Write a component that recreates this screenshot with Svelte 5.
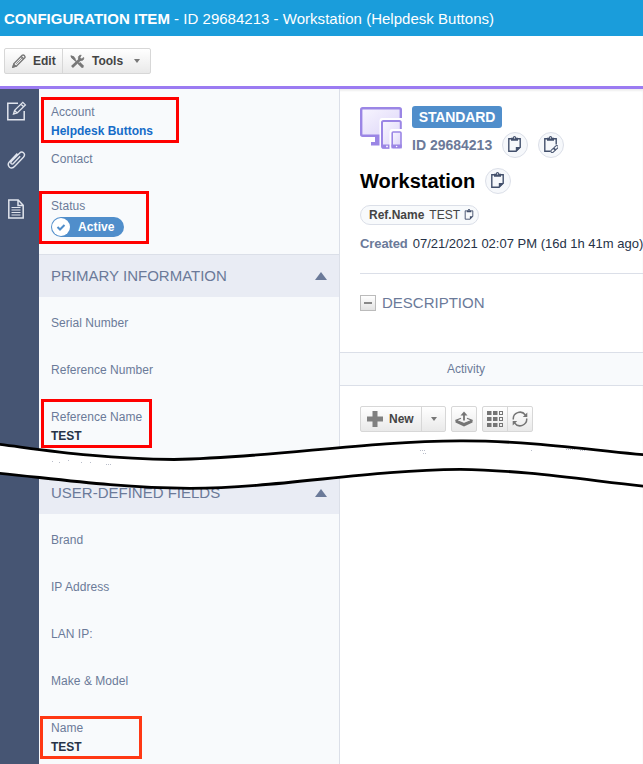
<script>
  const summary = [
    { label: 'Account', value: 'Helpdesk Buttons' },
    { label: 'Contact' },
    { label: 'Status', status: 'Active' }
  ];
  const primary = ['Serial Number', 'Reference Number', 'Reference Name'];
  const custom = ['Brand', 'IP Address', 'LAN IP:', 'Make & Model', 'Name'];
  const tested = ['Reference Name', 'Name'];
</script>

{#snippet clipboard(size, link)}
  <svg width={size} height={size * 17 / 15} viewBox="0 0 15 17" fill="none">
    <path d="M4 2.7H1.8V15.3H9L13.2 11.2V2.7H11" stroke="#43506c" stroke-width="1.4" />
    <path d="M4 1.8H5.7Q6 0 7.5 0Q9 0 9.3 1.8H11V4.8H4Z" fill="#43506c" />
    <circle cx="7.5" cy="1.9" r=".7" fill="#fff" />
    {#if link}
      <path d="M7.5 17V12.5L11 8.5H15V17Z" fill="#f6f8fb" />
      <g stroke="#43506c" stroke-width="1" transform="rotate(-43 11.5 13)">
        <rect x="7" y="11.7" width="5" height="2.8" rx="1.4" /><rect x="11" y="11.7" width="5" height="2.8" rx="1.4" />
      </g>
    {:else}
      <path d="M8.8 15.9V11H13.8Z" fill="#43506c" />
    {/if}
  </svg>
{/snippet}

{#snippet section(title)}
  <div class="section"><span>{title}</span><i class="up"></i></div>
{/snippet}

{#snippet field(label)}
  <div class="field">
    <div class="label">{label}</div>
    {#if tested.includes(label)}<div class="value">TEST</div>{/if}
  </div>
{/snippet}

<div class="page">
  <header><b>CONFIGURATION ITEM</b><span>&nbsp;- ID 29684213 - Workstation (Helpdesk Buttons)</span></header>
  <div class="toolbar">
    <div class="group">
      <button class="edit">
        <svg width="14" height="14" viewBox="0 0 14 14" fill="none" stroke="#777" stroke-width="1.4"><path d="M1 13L2 9.5L10.2 1.3Q11.2.5 12.4 1.6Q13.5 2.8 12.7 3.8L4.6 12Z M9.2 2.5L11.5 4.8" /><path d="M4.2 9.8L10 4" stroke-width=".8" /><path d="M1 13L1.8 10.5L3.8 12.2Z" fill="#777" /></svg>
        <span>Edit</span>
      </button>
      <button class="tools">
        <svg width="15" height="15" viewBox="0 0 15 15" fill="none" stroke="#777"><path d="M2 13L10.5 5" stroke-width="2.8" /><path d="M13.7 3.5L11.5 5L10 3.5L11.2 1.2C8.8.9 8 3 8.5 5L10 6.5C12 7 14.4 5.8 13.7 3.5Z" fill="#777" stroke-width=".8" /><path d="M1 2L5 6.3L13.3 13.5" stroke-width="1.3" /><path d="M9 9L13 13" stroke-width="3.1" /><path d="M.5 1.2L3.8 2.2L6 5.2L4.5 6.5L1.4 4Z" fill="#777" stroke="none" /></svg>
        <span>Tools</span><i class="down"></i>
      </button>
    </div>
  </div>
  <div class="body">
    <nav>
      <svg width="20" height="20" viewBox="0 0 20 20" fill="none" stroke="#e0e4ed" stroke-width="1.5"><path d="M11 2.2H.8V18.7H17.2V10" /><path d="M6.5 13L7.6 9.4L15.8 1.3L18.4 3.9L10.2 12Z M7.8 9.6L10 11.8 M14 3.2L16.6 5.8" stroke-width="1.3" /></svg>
      <svg width="20" height="20" viewBox="0 0 20 20" fill="none" stroke="#e0e4ed" stroke-width="1.4"><path d="M13.2 6.3L6.6 13.2Q5.2 14.8 4.2 13.6Q3.2 12.5 4.8 11L12.5 3.2Q14.6 1 16.5 2.7Q18.6 4.7 16.4 7.2L8 16Q5.1 19.4 2.5 17.2Q0 14.8 2.3 12L10.3 3.6" /></svg>
      <svg width="18" height="20" viewBox="0 0 18 20" fill="none" stroke="#e0e4ed" stroke-width="1.5"><path d="M1.8 1H11.2L16.2 6.2V19H1.8Z M11 1V6.5H16.2" /><path d="M4.5 8.5H13.5 M4.5 11H13.5 M4.5 13.5H13.5 M4.5 16H13.5" stroke-width="1" /></svg>
    </nav>
    <aside>
      {#each summary as f}
        <div class="field">
          <div class="label">{f.label}</div>
          {#if f.value}<div class="value link">{f.value}</div>{/if}
          {#if f.status}
            <div class="status"><svg width="18" height="18" viewBox="0 0 18 18"><circle cx="9" cy="9" r="9" fill="#fff" /><path d="M5.5 9L8 11.5L12.5 7" fill="none" stroke="#508ecb" stroke-width="2" /></svg>{f.status}</div>
          {/if}
        </div>
      {/each}
      <div class="gap"></div>
      {@render section('PRIMARY INFORMATION')}
      <div class="fields first">{#each primary as p}{@render field(p)}{/each}</div>
      {@render section('USER-DEFINED FIELDS')}
      <div class="fields">{#each custom as c}{@render field(c)}{/each}</div>
    </aside>
    <main>
      <div class="top">
        <div class="ident">
          <svg class="device" width="42" height="43" viewBox="0 0 42 43">
            <defs><linearGradient id="lilac" x2="1" y2="1"><stop stop-color="#f8f6ff" /><stop offset="1" stop-color="#dcd4f8" /></linearGradient></defs>
            <rect x="1.2" y="2.2" width="39.6" height="27.6" rx="1.5" fill="url(#lilac)" stroke="#9b86e5" stroke-width="2.4" />
            <path d="M15 31V36H11V39.5H21V31Z" fill="#9b86e5" />
            <path d="M19.5 43V15Q19.5 12 22 12H42V43Z" fill="#fff" />
            <rect x="22" y="15" width="18.8" height="26.7" rx="1.5" fill="url(#lilac)" stroke="#9b86e5" stroke-width="2" />
            <path d="M22 38.5H31V42.5H22Z" fill="#9b86e5" /><circle cx="27" cy="40.4" r=".9" fill="#fff" />
            <path d="M29.5 43V26Q29.5 23 32 23H42V43Z" fill="#fff" />
            <rect x="32.2" y="26" width="8.8" height="15.5" rx="1" fill="url(#lilac)" stroke="#9b86e5" stroke-width="1.6" />
            <path d="M31.5 38.5H41.8V42.4H31.5Z" fill="#9b86e5" /><circle cx="36.6" cy="40.5" r=".8" fill="#fff" />
          </svg>
          <div>
            <span class="badge">STANDARD</span>
            <div class="idrow"><b>ID 29684213</b><span class="round">{@render clipboard(15, false)}</span><span class="round second">{@render clipboard(15, true)}</span></div>
          </div>
        </div>
        <div class="title"><h1>Workstation</h1><span class="round">{@render clipboard(15, false)}</span></div>
        <div class="ref"><b>Ref.Name</b><span>TEST</span>{@render clipboard(10, false)}</div>
        <div class="created"><b>Created</b><span>07/21/2021 02:07 PM (16d 1h 41m ago)</span></div>
        <div class="rule"></div>
        <div class="desc"><i></i><span>DESCRIPTION</span></div>
      </div>
      <div class="activity"><span>Activity</span></div>
      <div class="actions">
        <div class="group">
          <button class="new"><svg width="16" height="16" viewBox="0 0 16 16"><path d="M5.5 0H10.5V5.5H16V10.5H10.5V16H5.5V10.5H0V5.5H5.5Z" fill="#808080" /></svg><span>New</span></button>
          <button class="more"><i class="down"></i></button>
        </div>
        <div class="group">
          <button class="icon"><svg width="18" height="16" viewBox="0 0 18 16" fill="none" stroke="#757575"><path d="M6 7.2L1.2 9.2L9 12.5L16.8 9.2L12 7.2" stroke-width="1.2" /><path d="M.5 9V11.5L9 15.4L17.5 11.5V9L9 12.6Z" fill="#757575" stroke="none" /><path d="M9 9.5V2" stroke-width="1.8" /><path d="M5.5 4.6L9 .5L12.5 4.6Z" fill="#757575" stroke="none" /></svg></button>
        </div>
        <div class="group">
          <button class="icon"><svg width="16" height="16" viewBox="0 0 16 16" fill="#757575">{#each [0, 6, 12] as y}<rect x="0" {y} width="4.5" height="4" /><rect x="6" {y} width="4.5" height="4" /><rect x="12.5" y={y + .5} width="3" height="3" fill="none" stroke="#757575" />{/each}</svg></button>
          <button class="icon"><svg width="16" height="16" viewBox="0 0 16 16" fill="none" stroke="#757575" stroke-width="1.5"><path d="M1.3 8.5A6.7 6.7 0 0 1 13.4 4 M14.7 7.5A6.7 6.7 0 0 1 2.6 12" /><path d="M15.3 1.5V6H10.8Z M.7 14.5V10H5.2Z" fill="#757575" stroke="none" /></svg></button>
        </div>
      </div>
    </main>
  </div>

  <svg class="tear" width="643" height="60" viewBox="0 435 643 60">
    <path d="M-3 444C45 450 100 459 174 459.5C270 458 365 441 460 440.8C522 440.5 585 449 646 455V486.5C585 480 522 470 460 469.3C365 470 280 488 190 488.3C115 488 50 478 -3 473Z" fill="#fff" />
    <path d="M-3 444C45 450 100 459 174 459.5C270 458 365 441 460 440.8C522 440.5 585 449 646 455M646 486.5C585 480 522 470 460 469.3C365 470 280 488 190 488.3C115 488 50 478 -3 473" fill="none" stroke="#000" stroke-width="2.8" />
    <path d="M52 461.5h1M59 462.5h2M68 460.5h1M81 462.5h1M90 462.5h2M106 464.5h5M420 450.5h6M423 453.5h4M531 450.5h2M566 449.5h10M580 450.5h6" stroke="#b9bdc9" stroke-dasharray="1 1" fill="none" />
  </svg>
  <div class="mark account"></div>
  <div class="mark state"></div>
  <div class="mark refname"></div>
  <div class="mark name"></div>
</div>

<style>
  .page { position: relative; width: 643px; height: 764px; overflow: hidden; display: flex; flex-direction: column; background: #fff; font-family: "Liberation Sans", Arial, sans-serif; font-size: 12px; color: #6b7a99; }
  .page * { box-sizing: border-box; white-space: nowrap; }
  svg { display: block; flex: none; }
  header { height: 36px; flex: none; background: #1a9ddb; color: #fff; font-size: 15px; line-height: 37px; padding-left: 4px; display: flex; letter-spacing: .02px; }
  .toolbar { height: 53px; flex: none; padding: 12px 4px 0; border-bottom: 3px solid #9b7bf2; }
  .group { display: inline-flex; height: 26px; border: 1px solid #d7d7d7; border-radius: 2px; background: linear-gradient(#fff, #e9e9e9); }
  button { border: 0; background: none; padding: 0; display: flex; align-items: center; font: bold 12px "Liberation Sans", Arial, sans-serif; color: #444; }
  button + button { border-left: 1px solid #d7d7d7; }
  .edit { width: 57px; padding-left: 7px; gap: 7px; }
  .tools { width: 88px; padding-left: 7px; gap: 7px; }
  .down { border: 3.5px solid transparent; border-top: 4.5px solid #777; border-bottom: 0; }
  .tools .down { margin-left: 4px; }
  .body { display: flex; flex: 1; box-shadow: inset 0 2px 2px #0001; }
  nav { width: 39px; background: #465573; display: flex; flex-direction: column; gap: 29px; padding: 12px 0 0 7px; flex: none; }
  aside { width: 301px; flex: none; background: #f8fafc; border-right: 1px solid #dbdfe8; }
  .field { height: 47px; padding: 14px 12px 0; line-height: 18px; letter-spacing: .04px; }
  .value { font-weight: bold; color: #263247; line-height: 20px; letter-spacing: 0; }
  .link { color: #156cc8; }
  .status { width: 73px; height: 20px; margin-top: 2px; border-radius: 10px; background: #508ecb; color: #fff; font-weight: bold; display: flex; align-items: center; gap: 8px; padding-left: 1px; letter-spacing: .1px; }
  .gap { height: 24px; }
  .section { height: 43px; background: #e9ecf4; border-top: 1px solid #dbdfe8; display: flex; align-items: center; justify-content: space-between; padding: 0 12px; font-size: 15px; }
  .section span { padding-bottom: 2px; }
  .up { border: 6px solid transparent; border-bottom: 8px solid #6b7a99; border-top: 0; }
  .fields { padding-top: 3px; }
  .first { height: 174px; }
  main { flex: 1; min-width: 0; }
  .top { height: 263px; padding: 17px 0 0 20px; }
  .ident { display: flex; gap: 10px; }
  .badge { display: block; width: 90px; height: 22px; border-radius: 3px; background: #508ecb; color: #fff; font-size: 14px; font-weight: bold; line-height: 22px; text-align: center; letter-spacing: -.1px; }
  .idrow { display: flex; align-items: center; height: 26px; margin-top: 4px; font-size: 14px; }
  .idrow b { width: 90px; }
  .round { width: 26px; height: 26px; border: 1px solid #dbdfe8; border-radius: 50%; background: #f6f8fb; display: flex; align-items: center; justify-content: center; flex: none; padding: 0 1px 1px 0; }
  .second { margin-left: 10px; }
  .title { display: flex; align-items: center; height: 26px; margin-top: 10px; }
  h1 { margin: 0; width: 125px; color: #000; font-size: 20px; padding-top: 1px; }
  .ref { display: flex; align-items: center; width: 119px; height: 20px; margin-top: 11px; border: 1px solid #dbdfe8; border-radius: 10px; background: #f8fafc; padding-left: 8px; gap: 5px; color: #444; }
  .ref svg { margin-left: -1px; }
  .created { margin-top: 10px; line-height: 17px; height: 18px; display: flex; gap: 5px; font-size: 13px; }
  .created b { letter-spacing: -.1px; }
  .created span { color: #263247; }
  .rule { height: 1px; background: #dbdfe8; margin-top: 20px; }
  .desc { display: flex; align-items: center; height: 20px; margin-top: 19px; gap: 6px; font-size: 15px; }
  .desc span { padding-bottom: 2px; }
  .desc i { width: 16px; height: 16px; border: 1px solid #bbb; background: linear-gradient(#fff, #e2e2e2); display: flex; align-items: center; justify-content: center; }
  .desc i::before { content: ""; width: 8px; height: 2px; background: #888; }
  .activity { height: 34px; border: 1px solid #dbdfe8; border-width: 1px 0; background: #f8fafc; padding-left: 107px; line-height: 32px; }
  .actions { display: flex; padding: 20px; gap: 5px; }
  .new { width: 60px; padding-left: 6px; gap: 6px; }
  .more { width: 24px; justify-content: center; }
  .icon { width: 24px; justify-content: center; }
  .icon + .icon { width: 25px; }
  .tear { position: absolute; left: 0; top: 435px; }
  .mark { position: absolute; border: 3px solid #f00; }
  .account { left: 41px; top: 97px; width: 138px; height: 46px; }
  .state { left: 39px; top: 191px; width: 110px; height: 53px; }
  .refname { left: 41px; top: 399px; width: 111px; height: 49px; }
  .name { left: 40px; top: 716px; width: 102px; height: 43px; border-color: #ff3814; }
</style>
